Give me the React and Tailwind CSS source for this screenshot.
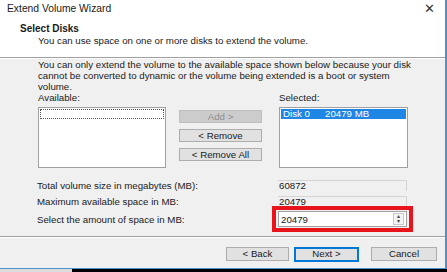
import React from 'react';

const font = { fontFamily: '"Liberation Sans", Arial, sans-serif' };

const Btn = ({ children, disabled, primary, className = '' }) => (
  <div
    className={
      'flex items-center justify-center border text-[9.7px] ' +
      (disabled
        ? 'bg-[#cccccc] border-[#bfbfbf] text-[#8c8c8c] '
        : primary
        ? 'bg-[#e1e1e1] border-[#0078d7] border-2 text-[#1a1a1a] '
        : 'bg-[#e1e1e1] border-[#adadad] text-[#1a1a1a] ') +
      className
    }
  >
    {children}
  </div>
);

const App = () => {
  return (
    <div className="w-[447px] h-[272px] overflow-hidden bg-black" style={font}>
      {/* dialog */}
      <div className="w-[447px] h-[269px] flex flex-col bg-[#f0f0f0] border-r-2 border-b border-[#4a94d4] text-[#1a1a1a]">
        {/* header */}
        <div className="h-[57px] bg-white shrink-0">
          <div className="flex items-center justify-between pl-[7px] pr-[10px] h-[17px]">
            <span className="text-[10.3px]">Extend Volume Wizard</span>
            <span className="text-[13px] leading-none text-[#333]">✕</span>
          </div>
          <div className="pl-[20px] pt-[5px] text-[10px] font-bold leading-[13px]">Select Disks</div>
          <div className="pl-[38px] text-[9.7px] leading-[12px]">
            You can use space on one or more disks to extend the volume.
          </div>
        </div>
        <div className="h-px bg-[#a0a0a0] shrink-0" />
        <div className="h-px bg-white shrink-0" />

        {/* body */}
        <div className="flex-1 pl-[38px] text-[9.7px] leading-[11px]">
          <p className="whitespace-nowrap">
            You can only extend the volume to the available space shown below because your disk
            <br />
            cannot be converted to dynamic or the volume being extended is a boot or system
            <br />
            volume.
          </p>
          <div className="flex">
            <div className="w-[128px] flex flex-col">
              <span className="h-[11px]">Available:</span>
              <div className="mt-[4px] h-[61px] bg-white border border-[#a0a0a0] p-px">
                <div className="h-[10px] border border-dotted border-[#555]" />
              </div>
            </div>
            <div className="ml-[13px] w-[83px] flex flex-col pt-[18px] gap-[6px]">
              <Btn disabled className="h-[13px]">Add &gt;</Btn>
              <Btn className="h-[13px]">&lt; Remove</Btn>
              <Btn className="h-[13px]">&lt; Remove All</Btn>
            </div>
            <div className="ml-[17px] w-[129px] flex flex-col">
              <span className="h-[11px]">Selected:</span>
              <div className="mt-[4px] h-[61px] bg-white border border-[#a0a0a0] p-px">
                <div className="h-[10px] bg-[#1f86e6] text-white flex leading-[10px]">
                  <span className="pl-[2px] w-[44px]">Disk 0</span>
                  <span>20479 MB</span>
                </div>
              </div>
            </div>
          </div>

          {/* sizes */}
          <div className="mt-[12px] flex flex-col">
            <div className="flex items-center h-[11px]">
              <span className="w-[241px] -ml-px">Total volume size in megabytes (MB):</span>
              <div className="w-[129px] h-[11px] bg-[#f0f0f0] border-t border-r border-[#d4d4d4] leading-[10px] pl-px">60872</div>
            </div>
            <div className="flex items-center h-[11px] mt-[5px]">
              <span className="w-[241px] -ml-px">Maximum available space in MB:</span>
              <div className="w-[129px] h-[11px] bg-[#f0f0f0] border-t border-r border-[#d4d4d4] leading-[10px] pl-px">20479</div>
            </div>
            <div className="flex items-center h-[16px] mt-[4px]">
              <span className="w-[241px] -ml-px">Select the amount of space in MB:</span>
              <div className="relative w-[129px] h-[16px] bg-white border border-[#a0a0a0] flex items-center justify-between pl-[2px] pr-[2px]">
                <span>20479</span>
                <div className="w-[11px] h-[12px] flex flex-col border border-[#c8c8c8] bg-[#f4f4f4] text-[6px] leading-[5px] text-[#444] items-center justify-center">
                  <span>▴</span>
                  <span>▾</span>
                </div>
                <div className="absolute -left-[7px] -top-[6px] w-[141px] h-[26px] border-[4px] border-[#e8141c]" />
              </div>
            </div>
          </div>
        </div>

        {/* footer */}
        <div className="h-px bg-[#a0a0a0] shrink-0" />
        <div className="h-px bg-white shrink-0" />
        <div className="h-[30px] shrink-0 flex items-start pt-[9px] pl-[226px]">
          <Btn className="w-[63px] h-[14px]">&lt; Back</Btn>
          <Btn primary className="w-[65px] h-[15px] ml-[5px]">Next &gt;</Btn>
          <Btn className="w-[66px] h-[14px] ml-[12px]">Cancel</Btn>
        </div>
      </div>
      {/* taskbar sliver */}
      <div className="h-[3px] flex">
        <div className="w-[72px] bg-[#dcdcdc]" />
        <div className="flex-1 bg-black" />
      </div>
    </div>
  );
};

export default App;
